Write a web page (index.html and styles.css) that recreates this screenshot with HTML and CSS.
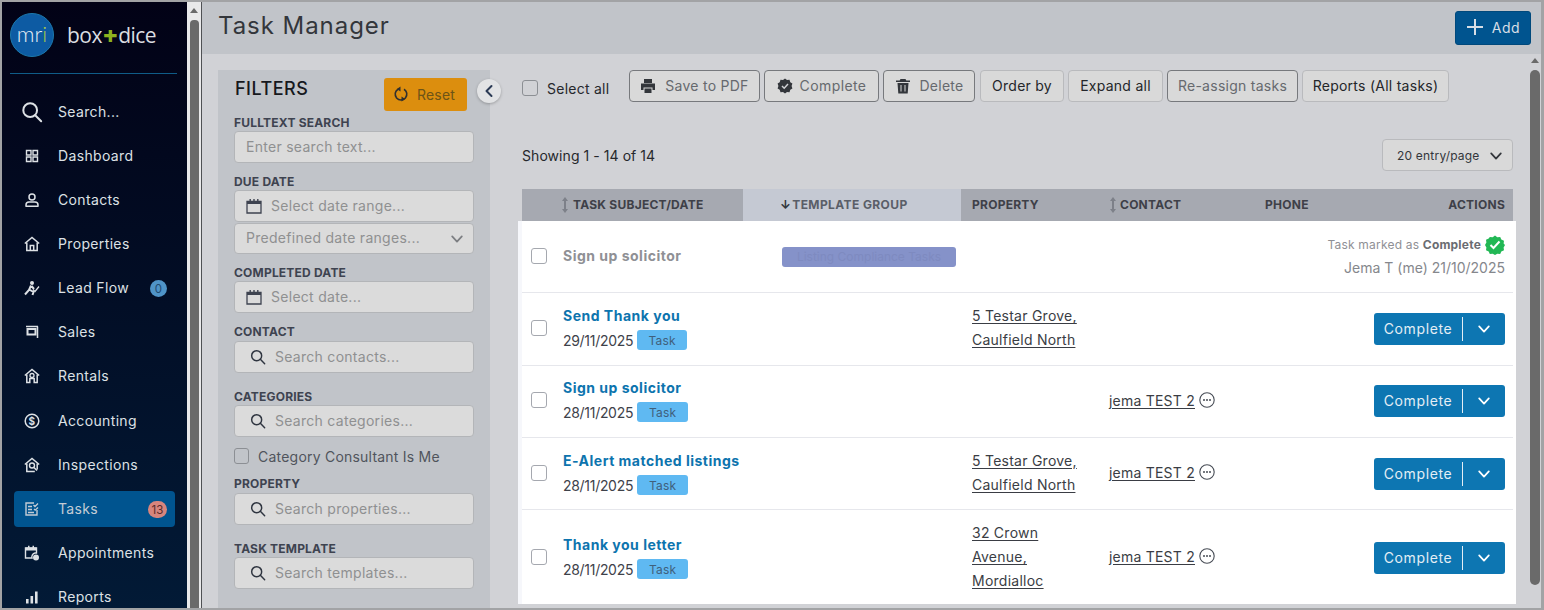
FILE: index.html
```html
<!DOCTYPE html>
<html lang="en">
<head>
<meta charset="utf-8">
<title>Task Manager</title>
<link rel="stylesheet" href="styles.css">
</head>
<body>
<svg class="defs" width="0" height="0" aria-hidden="true">
  <symbol id="i-search" viewBox="0 0 24 24"><circle cx="10" cy="10" r="7.5" fill="none" stroke="currentColor" stroke-width="2.2"/><path d="M15.5 15.5 22 22" fill="none" stroke="currentColor" stroke-width="2.2" stroke-linecap="round"/></symbol>
  <symbol id="i-cal" viewBox="0 0 16 16"><path d="M1 3.5h14V15H1z" fill="none" stroke="currentColor" stroke-width="1.3"/><path d="M1 3h14v3H1zM3.5 1h1.4v3H3.5zM7.3 1h1.4v3H7.3zM11.1 1h1.4v3h-1.4z" fill="currentColor"/></symbol>
  <symbol id="i-chev" viewBox="0 0 16 16"><path d="M2.5 5 8 11l5.500-6" fill="none" stroke="currentColor" stroke-width="2" stroke-linecap="round" stroke-linejoin="round"/></symbol>
  <symbol id="i-more" viewBox="0 0 16 16"><circle cx="8" cy="8" r="7.2" fill="none" stroke="currentColor" stroke-width="1.1"/><circle cx="5" cy="8" r="1" fill="currentColor"/><circle cx="8" cy="8" r="1" fill="currentColor"/><circle cx="11" cy="8" r="1" fill="currentColor"/></symbol>
  <symbol id="i-sort" viewBox="0 0 8 18"><path d="M4 1 7 5H5v8h2l-3 4-3-4h2V5H1z" fill="currentColor"/></symbol>
</svg>
<div class="frame">
  <aside class="sidebar">
    <div class="brand">
      <div class="mri">mr<span class="mri-i">i</span></div>
      <div class="wordmark">box<span class="plus">+</span>dice</div>
    </div>
    <nav class="nav">
      <a class="nav-item nav-search"><span class="nav-icon"><svg class="ic-22"><use href="#i-search"/></svg></span>Search...</a>
      <a class="nav-item"><span class="nav-icon"><svg class="ic-14" viewBox="0 0 14 14"><path d="M1.500 1.500h4.500v4.500H1.500zM8 1.500h4.500v4.500H8zM1.500 8h4.500v4.500H1.500zM8 8h4.500v4.500H8z" fill="none" stroke="currentColor" stroke-width="1.400"/></svg></span>Dashboard</a>
      <a class="nav-item"><span class="nav-icon"><svg class="ic-14" viewBox="0 0 14 14"><circle cx="7" cy="4" r="3" fill="none" stroke="currentColor" stroke-width="1.500"/><path d="M1 13.200v-1.200c0-2 1.500-3 3-3h6c1.500 0 3 1 3 3v1.200z" fill="none" stroke="currentColor" stroke-width="1.500" stroke-linejoin="round"/></svg></span>Contacts</a>
      <a class="nav-item"><span class="nav-icon"><svg class="ic-16" viewBox="0 0 16 16"><path d="M.8 7.500 8 1.500l7.200 6" fill="none" stroke="currentColor" stroke-width="1.500"/><path d="M2.800 6.500v8h10.400v-8M6.300 14.500v-5h3.400v5" fill="none" stroke="currentColor" stroke-width="1.500"/></svg></span>Properties</a>
      <a class="nav-item"><span class="nav-icon"><svg class="ic-16" viewBox="0 0 16 16"><circle cx="8" cy="3" r="2" fill="currentColor"/><path d="M7 5.500 5 10 1 14.500M6 10l3.500 2-1 3M7.500 6l2.500 3" fill="none" stroke="currentColor" stroke-width="2"/><path d="m9 9.500 2 2 4-5" fill="none" stroke="currentColor" stroke-width="1.300"/></svg></span>Lead Flow<span class="badge badge-blue">0</span></a>
      <a class="nav-item"><span class="nav-icon"><svg class="ic-14" viewBox="0 0 14 14"><path d="M1 1.500h12M12.500 1.500V13" fill="none" stroke="currentColor" stroke-width="1.500"/><path d="M2.500 4h8v5.500h-8z" fill="none" stroke="currentColor" stroke-width="2"/></svg></span>Sales</a>
      <a class="nav-item"><span class="nav-icon"><svg class="ic-16" viewBox="0 0 16 16"><path d="M.8 7.500 8 1.500l7.200 6" fill="none" stroke="currentColor" stroke-width="1.500"/><path d="M2.800 6.500v8h3v-4h4.400v4h3v-8" fill="none" stroke="currentColor" stroke-width="1.500"/><circle cx="8" cy="7.500" r="2" fill="none" stroke="currentColor" stroke-width="1.300"/></svg></span>Rentals</a>
      <a class="nav-item nav-shift"><span class="nav-icon"><svg class="ic-16" viewBox="0 0 16 16"><circle cx="8" cy="8" r="6.800" fill="none" stroke="currentColor" stroke-width="1.500"/><text x="8" y="11.500" text-anchor="middle" class="dollar">$</text></svg></span>Accounting</a>
      <a class="nav-item"><span class="nav-icon"><svg class="ic-16" viewBox="0 0 16 16"><path d="M.8 7.500 8 1.500l7.200 6" fill="none" stroke="currentColor" stroke-width="1.500"/><path d="M2.800 6.500v8h8M13.200 6.500v6" fill="none" stroke="currentColor" stroke-width="1.500"/><circle cx="8" cy="8.500" r="2.500" fill="none" stroke="currentColor" stroke-width="1.400"/><path d="m10 10.500 3 3" stroke="currentColor" stroke-width="1.500"/></svg></span>Inspections</a>
      <a class="nav-item nav-active"><span class="nav-icon"><svg class="ic-14" viewBox="0 0 14 14"><path d="M9 1H1v12h11V8" fill="none" stroke="currentColor" stroke-width="1.400"/><path d="M3 4.500h4M3 7.500h4M3 10.500h6" stroke="currentColor" stroke-width="1.300"/><path d="m8.500 3 1.500 1.500L13 1.500M9 7l1.200 1.200L13 5.500" fill="none" stroke="currentColor" stroke-width="1.300"/></svg></span>Tasks<span class="badge badge-red">13</span></a>
      <a class="nav-item"><span class="nav-icon"><svg class="ic-16" viewBox="0 0 16 16"><path d="M1.500 3h11v5h-1.500a4 4 0 0 0-3 5H1.500z" fill="none" stroke="currentColor" stroke-width="1.400"/><path d="M1.500 2.500h11v3h-11zM4 .8h1.500v2.500H4zM8.500 .8H10v2.500H8.500z" fill="currentColor"/><circle cx="12" cy="12.500" r="3" fill="currentColor"/></svg></span>Appointments</a>
      <a class="nav-item"><span class="nav-icon"><svg class="ic-14" viewBox="0 0 14 14"><path d="M1 9h2.600v4.500H1zM5.500 6h2.600v7.500H5.500zM10 1.500h2.600v12H10z" fill="currentColor"/></svg></span>Reports</a>
    </nav>
  </aside>
  <div class="rail"><span class="rail-arrow"></span><span class="rail-thumb"></span></div>
  <main class="main">
    <header class="topbar">
      <h1 class="title">Task Manager</h1>
      <button class="btn-add"><svg class="ic-18" viewBox="0 0 18 18"><path d="M9 1v16M1 9h16" stroke="currentColor" stroke-width="2"/></svg>Add</button>
    </header>
    <div class="content">
      <section class="filters">
        <div class="filters-head">
          <h2 class="filters-title">FILTERS</h2>
          <button class="btn-reset"><svg class="ic-16" viewBox="0 0 16 16"><path d="M5 3.200A5.800 5.800 0 1 0 11 3.200" fill="none" stroke="currentColor" stroke-width="1.600"/><path d="M7.500 .5v5L3.800 3zM8.500 15.500v-5l3.700 2.500z" fill="currentColor"/></svg>Reset</button>
        </div>
        <button class="collapse"><svg class="ic-14" viewBox="0 0 14 14"><path d="M9.500 2 4.500 7l5 5" fill="none" stroke="currentColor" stroke-width="2" stroke-linecap="round" stroke-linejoin="round"/></svg></button>
        <label class="flabel">FULLTEXT SEARCH</label>
        <div class="field">Enter search text...</div>
        <label class="flabel">DUE DATE</label>
        <div class="field field-cal"><svg class="ic-16 cal"><use href="#i-cal"/></svg>Select date range...</div>
        <div class="field field-select">Predefined date ranges...<svg class="ic-14 sel-chev"><use href="#i-chev"/></svg></div>
        <label class="flabel">COMPLETED DATE</label>
        <div class="field field-cal"><svg class="ic-16 cal"><use href="#i-cal"/></svg>Select date...</div>
        <label class="flabel flabel-tall">CONTACT</label>
        <div class="field field-search"><svg class="ic-16 mag"><use href="#i-search"/></svg>Search contacts...</div>
        <label class="flabel flabel-far">CATEGORIES</label>
        <div class="field field-search"><svg class="ic-16 mag"><use href="#i-search"/></svg>Search categories...</div>
        <div class="check-row"><span class="check check-f"></span>Category Consultant Is Me</div>
        <label class="flabel flabel-tall">PROPERTY</label>
        <div class="field field-search"><svg class="ic-16 mag"><use href="#i-search"/></svg>Search properties...</div>
        <label class="flabel flabel-far">TASK TEMPLATE</label>
        <div class="field field-search"><svg class="ic-16 mag"><use href="#i-search"/></svg>Search templates...</div>
      </section>
      <section class="list">
        <div class="toolbar">
          <div class="select-all"><span class="check check-a"></span>Select all</div>
          <button class="tb tb-off tb-pdf"><svg class="ic-16" viewBox="0 0 16 16"><path d="M4 1h8v4H4zM1 5.500h14V12h-2.500V9.500h-9V12H1zM4.500 10.500h7V15h-7z" fill="currentColor"/></svg>Save to PDF</button>
          <button class="tb tb-off tb-complete"><svg class="ic-16" viewBox="0 0 16 16"><path d="m8 .5 2 1.500 2.500-.2.800 2.400 2.100 1.400-.8 2.400.8 2.400-2.100 1.400-.8 2.400-2.500-.2L8 15.500 6 14l-2.500.2-.8-2.400L.6 10.400l.8-2.400-.8-2.400 2.100-1.400.8-2.400L6 2z" fill="currentColor"/><path d="m5 8 2.200 2.200L11 6" fill="none" stroke="#d1d2d6" stroke-width="1.500"/></svg>Complete</button>
          <button class="tb tb-off tb-delete"><svg class="ic-16" viewBox="0 0 16 16"><path d="M5.500 1h5l.8 1.500H15V4H1V2.500h3.700zM2.500 5h11l-.8 10.500H3.300zM5.500 7v6.500h1V7zM9.500 7v6.500h1V7z" fill="currentColor" fill-rule="evenodd"/></svg>Delete</button>
          <button class="tb tb-order">Order by</button>
          <button class="tb tb-expand">Expand all</button>
          <button class="tb tb-off tb-reassign">Re-assign tasks</button>
          <button class="tb tb-reports">Reports (All tasks)</button>
        </div>
        <div class="summary">
          <span>Showing 1 - 14 of 14</span>
          <div class="perpage">20 entry/page<svg class="ic-14"><use href="#i-chev"/></svg></div>
        </div>
        <div class="grid-head">
          <div class="th th-subject"><svg class="sort"><use href="#i-sort"/></svg>TASK SUBJECT/DATE</div>
          <div class="th th-sorted"><span class="arrow">↓</span>TEMPLATE GROUP</div>
          <div class="th">PROPERTY</div>
          <div class="th th-contact"><svg class="sort"><use href="#i-sort"/></svg>CONTACT</div>
          <div class="th">PHONE</div>
          <div class="th th-actions">ACTIONS</div>
        </div>
        <div class="rows">
          <div class="row row-1">
            <div class="cell-subject"><span class="check check-r"></span><div class="subject"><a class="task task-done">Sign up solicitor</a></div></div>
            <div class="cell-group"><span class="pill">Listing Compliance Tasks</span></div>
            <div></div><div></div><div></div>
            <div class="cell-actions done-col">
              <div class="done-line"><span>Task marked as <b>Complete</b></span><svg class="ic-20" viewBox="0 0 20 20"><path d="m10 .5 2.300 1.800 2.900-.4 1.100 2.700 2.700 1.100-.4 2.900L20 10l-1.400 2.400.4 2.900-2.700 1.100-1.100 2.700-2.900-.4L10 20l-2.300-1.300-2.900.4-1.100-2.700L1 15.300l.4-2.900L0 10l1.400-2.400L1 4.700l2.700-1.100L4.800 1.900l2.900.4z" fill="#22b855"/><path d="m5.500 10 3 3 6-6.500" fill="none" stroke="#fff" stroke-width="2"/></svg></div>
              <div class="done-by">Jema T (me) 21/10/2025</div>
            </div>
          </div>
          <div class="row row-2">
            <div class="cell-subject"><span class="check check-r"></span><div class="subject"><a class="task">Send Thank you</a><div class="meta">29/11/2025<span class="tag tag-narrow">Task</span></div></div></div>
            <div></div>
            <div class="cell-prop"><a>5 Testar Grove,</a><a>Caulfield North</a></div>
            <div></div><div></div>
            <div class="cell-actions"><div class="split"><span class="split-label">Complete</span><svg class="ic-14 split-chev"><use href="#i-chev"/></svg></div></div>
          </div>
          <div class="row row-3">
            <div class="cell-subject"><span class="check check-r"></span><div class="subject"><a class="task">Sign up solicitor</a><div class="meta">28/11/2025<span class="tag">Task</span></div></div></div>
            <div></div><div></div>
            <div class="cell-contact"><a>jema TEST 2</a><svg class="ic-16 more"><use href="#i-more"/></svg></div>
            <div></div>
            <div class="cell-actions"><div class="split"><span class="split-label">Complete</span><svg class="ic-14 split-chev"><use href="#i-chev"/></svg></div></div>
          </div>
          <div class="row row-4">
            <div class="cell-subject"><span class="check check-r"></span><div class="subject"><a class="task">E-Alert matched listings</a><div class="meta">28/11/2025<span class="tag">Task</span></div></div></div>
            <div></div>
            <div class="cell-prop"><a>5 Testar Grove,</a><a>Caulfield North</a></div>
            <div class="cell-contact"><a>jema TEST 2</a><svg class="ic-16 more"><use href="#i-more"/></svg></div>
            <div></div>
            <div class="cell-actions"><div class="split"><span class="split-label">Complete</span><svg class="ic-14 split-chev"><use href="#i-chev"/></svg></div></div>
          </div>
          <div class="row row-5">
            <div class="cell-subject"><span class="check check-r"></span><div class="subject"><a class="task">Thank you letter</a><div class="meta">28/11/2025<span class="tag">Task</span></div></div></div>
            <div></div>
            <div class="cell-prop"><a>32 Crown</a><a>Avenue,</a><a>Mordialloc</a></div>
            <div class="cell-contact"><a>jema TEST 2</a><svg class="ic-16 more"><use href="#i-more"/></svg></div>
            <div></div>
            <div class="cell-actions"><div class="split"><span class="split-label">Complete</span><svg class="ic-14 split-chev"><use href="#i-chev"/></svg></div></div>
          </div>
        </div>
      </section>
      <div class="rail rail-main"><span class="rail-arrow"></span><span class="rail-thumb"></span></div>
    </div>
  </main>
</div>
</body>
</html>
```
FILE: styles.css
```css
* { box-sizing: border-box; }
html, body { margin: 0; height: 610px; overflow: hidden; }
body { font-family: Inter, "Liberation Sans", sans-serif; font-size: 14px; color: #222; background: #fff; }
.defs { position: absolute; }
svg { display: block; flex: none; }
button { font: inherit; cursor: pointer; }
.ic-14 { width: 14px; height: 14px; }
.ic-16 { width: 16px; height: 16px; }
.ic-18 { width: 18px; height: 18px; }
.ic-20 { width: 20px; height: 20px; }
.ic-22 { width: 22px; height: 22px; }

.frame { display: flex; width: 1544px; height: 610px; border: 2px solid #a2a3a5; border-right-width: 3px; overflow: hidden; background: #d1d2d6; }

/* Sidebar */
.sidebar { width: 185px; flex: none; height: 100%; background: linear-gradient(180deg, #020216 0%, #021a36 100%); color: #dde1e5; }
.brand { display: flex; align-items: center; height: 72px; margin: 0 10px 0 8px; padding-bottom: 6px; border-bottom: 1px solid #0f5c88; }
.mri { width: 44px; height: 44px; border-radius: 50%; background: #0d5ba3; border: 1px solid #1c79ad; display: flex; align-items: center; justify-content: center; color: #e6eef5; font-size: 22px; font-family: Lato, sans-serif; font-weight: 300; padding-bottom: 2px; }
.mri-i { color: #a8cc4a; }
.wordmark { margin-left: 13px; font-family: "Open Sans", sans-serif; font-size: 21px; font-weight: 500; color: #dadde0; letter-spacing: -.5px; display: flex; align-items: center; line-height: 26px; }
.plus { color: #8db21f; font-weight: 800; font-size: 25px; margin: 0 1px; line-height: 26px; }
.nav { padding: 20px 12px 0; display: flex; flex-direction: column; gap: 8px; }
.nav-item { height: 36px; flex: none; display: flex; align-items: center; padding: 0 0 2px 44px; position: relative; letter-spacing: .35px; border-radius: 4px; }
.nav-icon { position: absolute; left: 0; top: 0; width: 36px; height: 36px; display: flex; align-items: center; justify-content: center; }
.nav-shift { margin-top: 1px; }
.nav-active { background: #00548f; color: #c3ccd5; }
.badge { position: absolute; right: 9px; top: 10px; min-width: 17px; height: 17px; border-radius: 9px; display: flex; align-items: center; justify-content: center; font-size: 11.5px; color: #1f4a70; letter-spacing: 0; }
.badge-blue { background: #4f94c8; right: 8px; }
.badge-red { background: #d8857d; color: #5a2a2a; right: 8px; min-width: 19px; }
.dollar { font-size: 10px; font-weight: 700; fill: currentColor; font-family: Inter, sans-serif; }

/* Scroll rails */
.rail { width: 15px; flex: none; height: 100%; background: #e9e9ea; border-right: 1px solid #4f5154; position: relative; padding: 18px 3px 0; }
.rail-arrow { position: absolute; left: 3px; top: 6px; width: 0; height: 0; border-left: 4px solid transparent; border-right: 4px solid transparent; border-bottom: 5px solid #6a6a6a; }
.rail-thumb { display: block; height: 100%; width: 9px; background: #6a6a6a; border-radius: 4px 4px 0 0; }
.rail-main { background: transparent; border: 0; position: absolute; left: 1529px; top: 54px; width: 11px; height: 531px; padding: 16px 0 0 1px; }
.rail-main .rail-thumb { width: 10px; border-radius: 5px; }
.rail-main .rail-arrow { left: 2px; top: 4px; }

/* Main */
.main { flex: 1; min-width: 0; height: 100%; display: flex; flex-direction: column; }
.topbar { height: 52px; flex: none; background: #c1c4c9; display: flex; align-items: center; justify-content: space-between; padding: 0 10px 0 16px; }
.title { margin: -5px 0 0; font-size: 24px; font-weight: 400; color: #33363b; letter-spacing: .95px; }
.btn-add { width: 76px; height: 34px; margin-top: -1px; background: #00548f; color: #d6dee6; border: 1px solid #00497c; border-radius: 3px; display: flex; align-items: center; justify-content: center; gap: 8px; font-size: 14px; letter-spacing: .6px; padding: 0 0 1px; }
.content { flex: 1; display: flex; padding: 16px 0 0 16px; min-height: 0; }

/* Filters */
.filters { width: 272px; flex: none; height: 100%; background: #c1c4c9; padding: 8px 16px 0; position: relative; }
.filters-head { display: flex; justify-content: space-between; height: 37px; padding-left: 1px; }
.filters-title { margin: 0; font-size: 18px; font-weight: 500; color: #16181d; letter-spacing: .5px; line-height: 22px; }
.btn-reset { width: 83px; height: 33px; margin-right: 7px; background: #dc8e0e; border: 0; border-radius: 3px; color: #6d5417; display: flex; align-items: center; justify-content: flex-start; gap: 8px; letter-spacing: .2px; padding: 0 0 1px 9px; }
.btn-reset svg { color: #2f2f2f; }
.collapse { position: absolute; left: 259px; top: 9px; width: 24px; height: 24px; padding: 0; border-radius: 50%; border: 0; background: #e2e3e5; color: #2b3a55; display: flex; align-items: center; justify-content: center; box-shadow: 0 1px 3px rgba(0,0,0,.25); }
.flabel { display: block; height: 16px; font-size: 12px; font-weight: 700; color: #3e4350; line-height: 16px; margin-top: 11px; letter-spacing: .2px; }
.filters-head + .collapse + .flabel { margin-top: 0; }
.flabel-tall { height: 18px; line-height: 18px; margin-top: 10px; }
.flabel-far { margin-top: 16px; }
.field { height: 32px; width: 240px; background: #dbdbdb; border: 1px solid #b3b5b8; border-radius: 4px; display: flex; align-items: center; padding: 0 0 2px 11px; color: #8f9091; letter-spacing: .28px; position: relative; }
.field-cal { padding-left: 36px; }
.field-search { padding-left: 40px; }
.field-select { margin-top: 1px; height: 31px; }
.cal { position: absolute; left: 11px; top: 7px; color: #3e4350; }
.mag { position: absolute; left: 15px; top: 7px; color: #2f3540; }
.sel-chev { position: absolute; right: 9px; top: 8px; color: #7c7e82; }
.check { display: block; flex: none; width: 16px; height: 16px; border: 1px solid #8c8f94; border-radius: 3px; background: #dcdcdc; }
.check-row { height: 18px; margin-top: 10px; display: flex; align-items: center; gap: 9px; color: #50545c; letter-spacing: .22px; }
.check-f { width: 15px; height: 16px; background: transparent; }

/* List */
.list { flex: none; width: 991px; margin-left: 32px; position: relative; }
.toolbar { display: flex; align-items: flex-start; height: 32px; gap: 4px; }
.select-all { width: 103px; height: 36px; display: flex; align-items: center; gap: 9px; color: #26282c; letter-spacing: .25px; }
.check-a { background: transparent; }
.tb { height: 32px; flex: none; padding: 0 0 2px; background: #d9d9d9; border: 1px solid #b9babd; border-radius: 4px; display: flex; align-items: center; justify-content: center; gap: 9px; color: #24262a; letter-spacing: .26px; font-size: 14px; }
.tb-off { border-color: #77797d; color: #66696e; }
.tb-off svg { color: #33363b; margin-top: 2px; }
.tb-pdf { width: 131px; }
.tb-complete { width: 115px; gap: 7px; letter-spacing: .4px; }
.tb-delete { width: 92px; margin-right: 1px; }
.tb-order { width: 84px; }
.tb-expand { width: 95px; }
.tb-reassign { width: 131px; }
.tb-reports { width: 147px; }
.summary { height: 32px; margin-top: 37px; display: flex; align-items: center; justify-content: space-between; color: #26282c; letter-spacing: .06px; }
.perpage { width: 131px; height: 32px; background: #d9d9d9; border: 1px solid #b9babd; border-radius: 4px; display: flex; align-items: center; justify-content: space-between; padding: 1px 9px 0 14px; font-size: 12px; letter-spacing: .2px; color: #33363b; }
.grid-head, .row { display: grid; grid-template-columns: 221px 218px 139px 154px 110px 149px; }
.grid-head { height: 32px; margin-top: 18px; background: #a6a9b1; align-items: center; }
.th { height: 100%; display: flex; align-items: center; font-size: 12px; font-weight: 700; color: #3e4048; padding: 0 0 1px 11px; gap: 4px; letter-spacing: .25px; white-space: nowrap; }
.th-subject { padding-left: 39px; }
.th-sorted { background: #c5c9d3; padding-left: 37px; color: #5a5e68; gap: 1px; letter-spacing: .4px; }
.th-contact { padding-left: 9px; gap: 3px; }
.th-actions { justify-content: flex-end; padding-right: 8px; }
.sort { width: 8px; height: 18px; color: #7d8089; }
.arrow { font-size: 12px; color: #33363b; }
.rows { background: #fff; margin: 0 -3px 0 -4px; padding: 0 3px 0 4px; box-shadow: inset 4px 0 0 #f6f7fb; }
.row { border-bottom: 1px solid #e6e7ec; align-items: center; }
.row:last-child { border-bottom: 0; }
.row-1 { height: 72px; }
.row-2 { height: 73px; }
.row-3 { height: 72px; }
.row-4 { height: 72px; }
.row-5 { height: 94px; }
.cell-subject { display: flex; align-items: center; padding-left: 9px; gap: 16px; white-space: nowrap; height: 100%; }
.row-1 .cell-subject { padding-bottom: 1px; }
.row-2 .cell-subject { padding-bottom: 2px; }
.row-3 .cell-subject { padding-bottom: 3px; }
.row-4 .cell-subject { padding-bottom: 1px; }
.row-2 .cell-prop, .row-4 .cell-prop { padding-bottom: 2px; }
.row-3 .split { margin-bottom: 2px; }
.row-5 .split { margin-top: 2px; }
.check-r { background: #fff; border-color: #a5a8af; }
.subject { display: flex; flex-direction: column; gap: 4px; }
.task { font-weight: 700; color: #0d74ae; font-size: 14px; line-height: 20px; letter-spacing: .5px; }
.task-done { color: #8f9095; }
.meta { display: flex; align-items: center; gap: 4px; color: #3e424a; height: 20px; letter-spacing: -.3px; }
.tag { width: 51px; height: 20px; background: #5fb9f2; border-radius: 3px; color: #3f607c; font-size: 12px; letter-spacing: .2px; display: flex; align-items: center; justify-content: center; }
.tag-narrow { width: 50px; }
.cell-group { padding-left: 39px; }
.pill { display: flex; align-items: center; justify-content: center; width: 174px; height: 20px; background: #8592c9; border-radius: 3px; color: #7e8ac0; font-size: 12px; white-space: nowrap; }
.cell-prop { display: flex; flex-direction: column; align-items: flex-start; padding-left: 11px; line-height: 24px; color: #3a3d44; letter-spacing: .25px; }
.cell-prop a, .cell-contact a { text-decoration: underline; text-underline-offset: 2px; white-space: nowrap; }
.cell-contact { display: flex; align-items: center; gap: 4px; padding: 0 0 2px 9px; color: #3a3d44; letter-spacing: .22px; }
.more { color: #474c55; margin-top: -1px; }
.cell-actions { display: flex; justify-content: flex-end; padding-right: 8px; }
.done-col { flex-direction: column; align-items: flex-end; white-space: nowrap; margin-left: -100px; padding-top: 2px; }
.done-line { display: flex; align-items: center; gap: 4px; font-size: 12px; letter-spacing: .2px; color: #8f9095; height: 20px; }
.done-line b { color: #6a6c72; }
.done-by { color: #85878c; line-height: 26px; }
.split { width: 131px; height: 32px; background: #0d76b2; border-radius: 3px; color: #e4eef5; display: flex; align-items: center; letter-spacing: .6px; }
.split-label { width: 89px; height: 24px; line-height: 24px; text-align: center; border-right: 1px solid #e4eef5; }
.split-chev { margin-left: 14px; color: #fff; }
```
